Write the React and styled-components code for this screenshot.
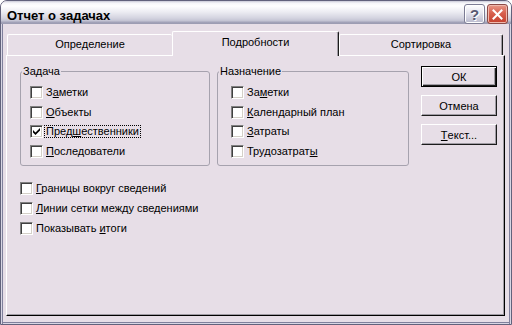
import React from 'react';
import styled, { createGlobalStyle } from 'styled-components';

const GlobalStyle = createGlobalStyle`
  html, body {
    margin: 0;
    padding: 0;
    background: #ffffff;
  }
  body {
    font-family: "Liberation Sans", Arial, sans-serif;
    font-size: 11px;
    color: #000;
  }
`;

const Window = styled.div`
  width: 512px;
  height: 325px;
  box-sizing: border-box;
  border: 1px solid #62627c;
  border-radius: 7px 7px 0 0;
  background: #e7dee7;
  display: flex;
  flex-direction: column;
  overflow: hidden;
`;

const TitleBar = styled.div`
  flex: none;
  height: 23px;
  display: flex;
  align-items: flex-start;
  padding: 0 3px 0 6px;
  background: linear-gradient(
    to bottom,
    #c9c9d6 0px,
    #f6f6f9 2px,
    #ffffff 5px,
    #ececf2 11px,
    #d4d4e0 17px,
    #c2c2d2 20px,
    #a4a4ba 21px,
    #9a9ab0 23px
  );
`;

const Caption = styled.div`
  flex: 1;
  font-weight: bold;
  font-size: 13px;
  line-height: 15px;
  padding-top: 7px;
  color: #000;
`;

const CaptionButtons = styled.div`
  display: flex;
  gap: 2px;
  margin-top: 3px;
`;

const CaptionButton = styled.div`
  width: 21px;
  height: 20px;
  box-sizing: border-box;
  border-radius: 3px;
  display: flex;
  align-items: center;
  justify-content: center;
  border: 1px solid ${p => (p.$close ? '#8c4a46' : '#7c7c94')};
  box-shadow: inset 0 0 0 1px ${p => (p.$close ? '#f0b8ac' : '#ffffff')};
  background: ${p =>
    p.$close
      ? 'linear-gradient(to bottom, #e89a8a 0%, #d8604e 45%, #c4402e 100%)'
      : 'linear-gradient(to bottom, #ffffff 0%, #e4e4ee 45%, #b8b8cc 100%)'};
  color: #5a5a72;
  font-weight: bold;
  font-size: 15px;
  text-shadow: 1px 1px 0 #ffffff;
`;

const Body = styled.div`
  flex: 1;
  display: flex;
  flex-direction: column;
  padding: 7px 6px 8px 5px;
  box-shadow:
    inset 1px 0 0 #d8d6e4,
    inset 2px 0 0 #80809c,
    inset -1px 0 0 #d8d6e4,
    inset -2px 0 0 #80809c,
    inset 0 -1px 0 #d8d6e4,
    inset 0 -2px 0 #80809c;
`;

const TabRow = styled.div`
  height: 24px;
  display: flex;
  align-items: flex-end;
  padding-left: 1px;
  position: relative;
  z-index: 1;
`;

const Tab = styled.div`
  box-sizing: border-box;
  width: ${p => p.$width}px;
  height: ${p => (p.$active ? 25 : 21)}px;
  margin-bottom: ${p => (p.$active ? -1 : 0)}px;
  padding-top: ${p => (p.$active ? 4 : 3)}px;
  text-align: center;
  line-height: 13px;
  background: #e7dee7;
  border-top: 1px solid #ffffff;
  border-left: 1px solid #ffffff;
  border-right: ${p => (p.$right ? '1px solid #1c1c1c' : 'none')};
  border-radius: 2px 2px 0 0;
  box-shadow: ${p => (p.$right ? 'inset -1px 0 0 #a09ca4' : 'none')};
`;

const Panel = styled.div`
  flex: 1;
  box-sizing: border-box;
  border: 1px solid;
  border-color: #ffffff #000000 #000000 #ffffff;
  box-shadow: inset -1px -1px 0 #a09ca4;
  padding: 8px 0 0 13px;
`;

const TopRow = styled.div`
  display: flex;
  align-items: flex-start;
`;

const GroupBox = styled.fieldset`
  box-sizing: border-box;
  width: ${p => p.$width}px;
  margin: 0 0 0 ${p => p.$gap || 0}px;
  padding: 0;
  min-width: 0;
  border: 1px solid #a6a2ae;
  border-radius: 3px;
`;

const Legend = styled.legend`
  margin-left: 1px;
  padding: 0 1px;
  line-height: 14px;
`;

const GroupList = styled.div`
  padding: 5px 0 4px ${p => p.$indent}px;
`;

const CheckRow = styled.div`
  display: flex;
  align-items: center;
  height: ${p => p.$h}px;
`;

const Box = styled.span`
  flex: none;
  width: 13px;
  height: 13px;
  box-sizing: border-box;
  border: 1px solid;
  border-color: #808080 #ffffff #ffffff #808080;
  box-shadow: inset 1px 1px 0 #404040, inset -1px -1px 0 #d4d0c8;
  background: #ffffff;
  display: flex;
  align-items: center;
  justify-content: center;
`;

const Label = styled.span`
  margin-left: 1px;
  padding: 0 1px;
  line-height: 11px;
  border: 1px dotted ${p => (p.$focus ? '#000' : 'transparent')};
  white-space: nowrap;
`;

const Mnemonic = styled.span`
  text-decoration: underline;
`;

const BottomList = styled.div`
  margin-top: 12px;
`;

const ButtonColumn = styled.div`
  margin: 2px 0 0 12px;
  display: flex;
  flex-direction: column;
  gap: 8px;
`;

const DialogButton = styled.div`
  box-sizing: border-box;
  width: 76px;
  height: 21px;
  display: flex;
  align-items: center;
  justify-content: center;
  background: #e7dee7;
  border: 1px solid;
  border-color: ${p => (p.$default ? '#000 #000 #000 #000' : '#ffffff #1c1c1c #1c1c1c #ffffff')};
  box-shadow: ${p =>
    p.$default
      ? 'inset 1px 1px 0 #ffffff, inset -1px -1px 0 #1c1c1c, inset -2px -2px 0 #a09ca4'
      : 'inset -1px -1px 0 #a09ca4'};
`;

function Check() {
  return (
    <svg width="7" height="7" viewBox="0 0 7 7">
      <path d="M0 2 L2.5 4.5 L7 0 L7 2.6 L2.5 7 L0 4.6 Z" fill="#000" />
    </svg>
  );
}

function Checkbox({ checked, focus, h = 19.5, children }) {
  return (
    <CheckRow $h={h}>
      <Box>{checked && <Check />}</Box>
      <Label $focus={focus}>{children}</Label>
    </CheckRow>
  );
}

export default function App() {
  return (
    <>
      <GlobalStyle />
      <Window>
        <TitleBar>
          <Caption>Отчет о задачах</Caption>
          <CaptionButtons>
            <CaptionButton>?</CaptionButton>
            <CaptionButton $close>
              <svg width="11" height="11" viewBox="0 0 11 11">
                <path d="M1.5 1.5 L9.5 9.5 M9.5 1.5 L1.5 9.5" stroke="#fff" strokeWidth="2" strokeLinecap="square" />
              </svg>
            </CaptionButton>
          </CaptionButtons>
        </TitleBar>
        <Body>
          <TabRow>
            <Tab $width={165}>Определение</Tab>
            <Tab $width={167} $active $right>Подробности</Tab>
            <Tab $width={164} $right>Сортировка</Tab>
          </TabRow>
          <Panel>
            <TopRow>
              <GroupBox $width={190}>
                <Legend>Задача</Legend>
                <GroupList $indent={9}>
                  <Checkbox>З<Mnemonic>а</Mnemonic>метки</Checkbox>
                  <Checkbox><Mnemonic>О</Mnemonic>бъекты</Checkbox>
                  <Checkbox checked focus>Пред<Mnemonic>ш</Mnemonic>ественники</Checkbox>
                  <Checkbox><Mnemonic>П</Mnemonic>оследователи</Checkbox>
                </GroupList>
              </GroupBox>
              <GroupBox $width={192} $gap={7}>
                <Legend>Назначение</Legend>
                <GroupList $indent={13}>
                  <Checkbox>За<Mnemonic>м</Mnemonic>етки</Checkbox>
                  <Checkbox><Mnemonic>К</Mnemonic>алендарный план</Checkbox>
                  <Checkbox><Mnemonic>З</Mnemonic>атраты</Checkbox>
                  <Checkbox>Трудозатрат<Mnemonic>ы</Mnemonic></Checkbox>
                </GroupList>
              </GroupBox>
              <ButtonColumn>
                <DialogButton $default>ОК</DialogButton>
                <DialogButton>Отмена</DialogButton>
                <DialogButton><Mnemonic>Т</Mnemonic>екст...</DialogButton>
              </ButtonColumn>
            </TopRow>
            <BottomList>
              <Checkbox h={20}><Mnemonic>Г</Mnemonic>раницы вокруг сведений</Checkbox>
              <Checkbox h={20}><Mnemonic>Л</Mnemonic>инии сетки между сведениями</Checkbox>
              <Checkbox h={20}>Показывать <Mnemonic>и</Mnemonic>тоги</Checkbox>
            </BottomList>
          </Panel>
        </Body>
      </Window>
    </>
  );
}
